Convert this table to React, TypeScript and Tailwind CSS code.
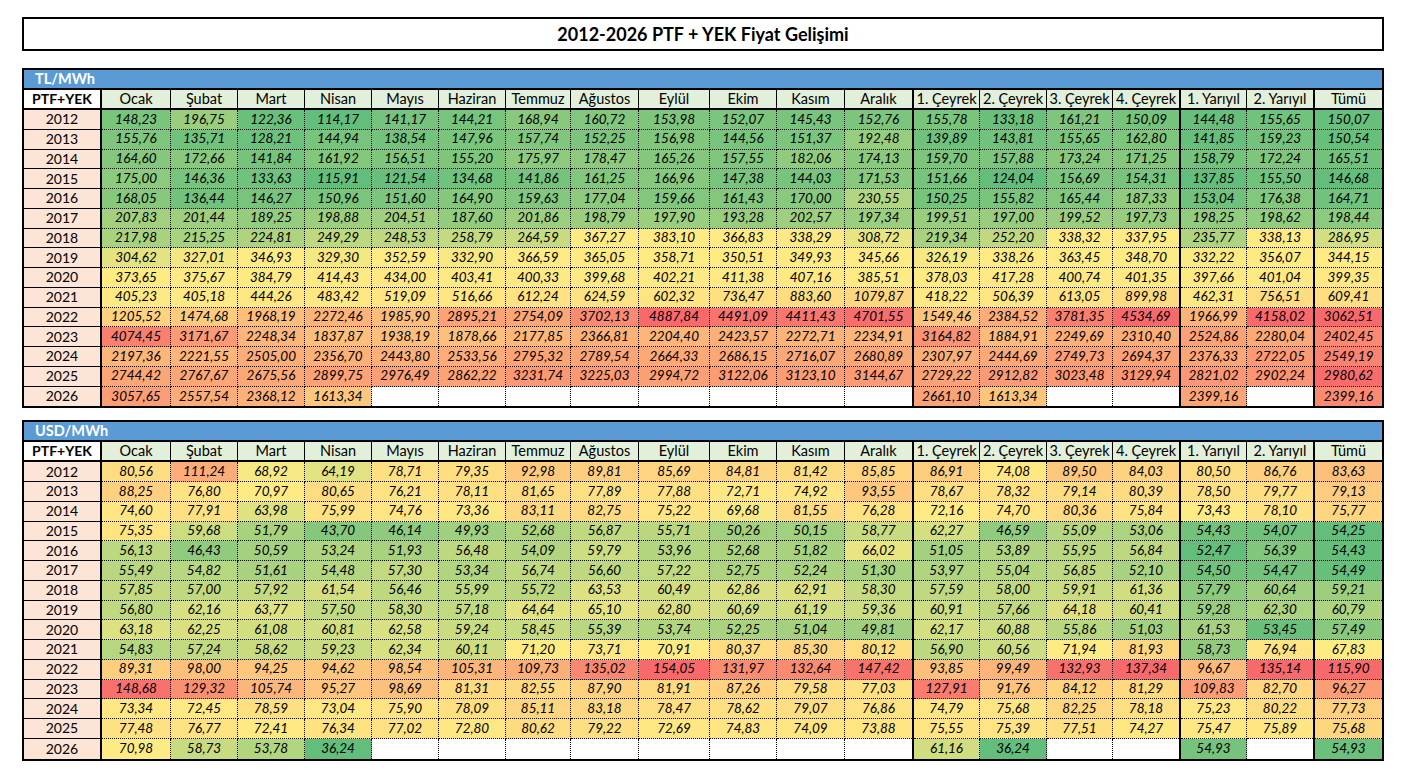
import React from "react";

const YEARS = ["2012","2013","2014","2015","2016","2017","2018","2019","2020","2021","2022","2023","2024","2025","2026"];

const TL: string[] = [
  "148,23 196,75 122,36 114,17 141,17 144,21 168,94 160,72 153,98 152,07 145,43 152,76 155,78 133,18 161,21 150,09 144,48 155,65 150,07",
  "155,76 135,71 128,21 144,94 138,54 147,96 157,74 152,25 156,98 144,56 151,37 192,48 139,89 143,81 155,65 162,80 141,85 159,23 150,54",
  "164,60 172,66 141,84 161,92 156,51 155,20 175,97 178,47 165,26 157,55 182,06 174,13 159,70 157,88 173,24 171,25 158,79 172,24 165,51",
  "175,00 146,36 133,63 115,91 121,54 134,68 141,86 161,25 166,96 147,38 144,03 171,53 151,66 124,04 156,69 154,31 137,85 155,50 146,68",
  "168,05 136,44 146,27 150,96 151,60 164,90 159,63 177,04 159,66 161,43 170,00 230,55 150,25 155,82 165,44 187,33 153,04 176,38 164,71",
  "207,83 201,44 189,25 198,88 204,51 187,60 201,86 198,79 197,90 193,28 202,57 197,34 199,51 197,00 199,52 197,73 198,25 198,62 198,44",
  "217,98 215,25 224,81 249,29 248,53 258,79 264,59 367,27 383,10 366,83 338,29 308,72 219,34 252,20 338,32 337,95 235,77 338,13 286,95",
  "304,62 327,01 346,93 329,30 352,59 332,90 366,59 365,05 358,71 350,51 349,93 345,66 326,19 338,26 363,45 348,70 332,22 356,07 344,15",
  "373,65 375,67 384,79 414,43 434,00 403,41 400,33 399,68 402,21 411,38 407,16 385,51 378,03 417,28 400,74 401,35 397,66 401,04 399,35",
  "405,23 405,18 444,26 483,42 519,09 516,66 612,24 624,59 602,32 736,47 883,60 1079,87 418,22 506,39 613,05 899,98 462,31 756,51 609,41",
  "1205,52 1474,68 1968,19 2272,46 1985,90 2895,21 2754,09 3702,13 4887,84 4491,09 4411,43 4701,55 1549,46 2384,52 3781,35 4534,69 1966,99 4158,02 3062,51",
  "4074,45 3171,67 2248,34 1837,87 1938,19 1878,66 2177,85 2366,81 2204,40 2423,57 2272,71 2234,91 3164,82 1884,91 2249,69 2310,40 2524,86 2280,04 2402,45",
  "2197,36 2221,55 2505,00 2356,70 2443,80 2533,56 2795,32 2789,54 2664,33 2686,15 2716,07 2680,89 2307,97 2444,69 2749,73 2694,37 2376,33 2722,05 2549,19",
  "2744,42 2767,67 2675,56 2899,75 2976,49 2862,22 3231,74 3225,03 2994,72 3122,06 3123,10 3144,67 2729,22 2912,82 3023,48 3129,94 2821,02 2902,24 2980,62",
  "3057,65 2557,54 2368,12 1613,34 - - - - - - - - 2661,10 1613,34 - - 2399,16 - 2399,16",
];

const USD: string[] = [
  "80,56 111,24 68,92 64,19 78,71 79,35 92,98 89,81 85,69 84,81 81,42 85,85 86,91 74,08 89,50 84,03 80,50 86,76 83,63",
  "88,25 76,80 70,97 80,65 76,21 78,11 81,65 77,89 77,88 72,71 74,92 93,55 78,67 78,32 79,14 80,39 78,50 79,77 79,13",
  "74,60 77,91 63,98 75,99 74,76 73,36 83,11 82,75 75,22 69,68 81,55 76,28 72,16 74,70 80,36 75,84 73,43 78,10 75,77",
  "75,35 59,68 51,79 43,70 46,14 49,93 52,68 56,87 55,71 50,26 50,15 58,77 62,27 46,59 55,09 53,06 54,43 54,07 54,25",
  "56,13 46,43 50,59 53,24 51,93 56,48 54,09 59,79 53,96 52,68 51,82 66,02 51,05 53,89 55,95 56,84 52,47 56,39 54,43",
  "55,49 54,82 51,61 54,48 57,30 53,34 56,74 56,60 57,22 52,75 52,24 51,30 53,97 55,04 56,85 52,10 54,50 54,47 54,49",
  "57,85 57,00 57,92 61,54 56,46 55,99 55,72 63,53 60,49 62,86 62,91 58,30 57,59 58,00 59,91 61,36 57,79 60,64 59,21",
  "56,80 62,16 63,77 57,50 58,30 57,18 64,64 65,10 62,80 60,69 61,19 59,36 60,91 57,66 64,18 60,41 59,28 62,30 60,79",
  "63,18 62,25 61,08 60,81 62,58 59,24 58,45 55,39 53,74 52,25 51,04 49,81 62,17 60,88 55,86 51,03 61,53 53,45 57,49",
  "54,83 57,24 58,62 59,23 62,34 60,11 71,20 73,71 70,91 80,37 85,30 80,12 56,90 60,56 71,94 81,93 58,73 76,94 67,83",
  "89,31 98,00 94,25 94,62 98,54 105,31 109,73 135,02 154,05 131,97 132,64 147,42 93,85 99,49 132,93 137,34 96,67 135,14 115,90",
  "148,68 129,32 105,74 95,27 98,69 81,31 82,55 87,90 81,91 87,26 79,58 77,03 127,91 91,76 84,12 81,29 109,83 82,70 96,27",
  "73,34 72,45 78,59 73,04 75,90 78,09 85,11 83,18 78,47 78,62 79,07 76,86 74,79 75,68 82,25 78,18 75,23 80,22 77,73",
  "77,48 76,77 72,41 76,34 77,02 72,80 80,62 79,22 72,69 74,83 74,09 73,88 75,55 75,39 77,51 74,27 75,47 75,89 75,68",
  "70,98 58,73 53,78 36,24 - - - - - - - - 61,16 36,24 - - 54,93 - 54,93",
];

const HEADERS = ["Ocak","Şubat","Mart","Nisan","Mayıs","Haziran","Temmuz","Ağustos","Eylül","Ekim","Kasım","Aralık","1. Çeyrek","2. Çeyrek","3. Çeyrek","4. Çeyrek","1. Yarıyıl","2. Yarıyıl","Tümü"];

const WIDTHS = [
  "w-[69px]","w-[67px]","w-[67px]","w-[67px]","w-[67px]","w-[67px]","w-[65px]","w-[68px]","w-[71px]","w-[67px]","w-[68px]","w-[67px]",
  "w-[66px]","w-[67px]","w-[66px]","w-[66px]",
  "w-[66px]","w-[66px]",
  "w-[67px]",
];

const GROUPS: [number, number][] = [[0, 12], [12, 16], [16, 18], [18, 19]];
const LAST_IN_GROUP = new Set([11, 15, 17, 18]);
const SEP_AFTER = new Set([11, 15, 17]);

const G = [99, 190, 123];
const Y = [255, 235, 132];
const R = [248, 105, 107];

function parse(s: string): number | null {
  if (s === "-") return null;
  return parseFloat(s.replace(",", "."));
}

function lerp(a: number[], b: number[], t: number) {
  const c = a.map((v, i) => Math.round(v + (b[i] - v) * Math.max(0, Math.min(1, t))));
  return `rgb(${c[0]},${c[1]},${c[2]})`;
}

function percentile50(vals: number[]) {
  const s = [...vals].sort((a, b) => a - b);
  const r = 0.5 * (s.length - 1);
  const lo = Math.floor(r);
  const hi = Math.ceil(r);
  return s[lo] + (s[hi] - s[lo]) * (r - lo);
}

function buildColors(rows: string[][]) {
  const colors: (string | null)[][] = rows.map((r) => r.map(() => null));
  for (const [a, b] of GROUPS) {
    const vals: number[] = [];
    rows.forEach((r) => {
      for (let i = a; i < b; i++) {
        const v = parse(r[i]);
        if (v !== null) vals.push(v);
      }
    });
    const min = Math.min(...vals);
    const max = Math.max(...vals);
    const mid = percentile50(vals);
    rows.forEach((r, ri) => {
      for (let i = a; i < b; i++) {
        const v = parse(r[i]);
        if (v === null) continue;
        colors[ri][i] = v <= mid ? lerp(G, Y, (v - min) / (mid - min)) : lerp(Y, R, (v - mid) / (max - mid));
      }
    });
  }
  return colors;
}

function Sep() {
  return <div className="w-[2px] shrink-0 self-stretch bg-black" />;
}

function DataTable({ title, data }: { title: string; data: string[] }) {
  const rows = data.map((r) => r.split(" "));
  const colors = buildColors(rows);
  return (
    <div className="ml-[22px] w-[1362px] border-2 border-black">
      <div className="flex h-[17.5px] items-center bg-[#5B9BD5] pl-[11px] text-[14.5px] font-bold leading-none text-white">
        {title}
      </div>
      <div className="h-[2px] bg-black" />
      <div className="flex h-[18.5px] text-[14.5px] leading-none">
        <div className="flex w-[76px] shrink-0 items-center justify-center bg-white text-[14px] font-bold">PTF+YEK</div>
        <Sep />
        {HEADERS.map((h, i) => (
          <React.Fragment key={h}>
            <div
              className={`${WIDTHS[i]} flex shrink-0 items-center justify-center bg-[#E2EFDA] ${
                LAST_IN_GROUP.has(i) ? "" : "border-r border-black"
              }`}
            >
              {h}
            </div>
            {SEP_AFTER.has(i) && <Sep />}
          </React.Fragment>
        ))}
      </div>
      <div className="h-[2px] bg-black" />
      {rows.map((r, ri) => {
        const lastRow = ri === rows.length - 1;
        return (
          <div key={ri} className="flex h-[19.75px] text-[13.5px] leading-none">
            <div
              className={`flex w-[76px] shrink-0 items-center justify-center bg-[#FCE4D6] text-[14px] ${
                lastRow ? "" : "border-b border-black"
              }`}
            >
              {YEARS[ri]}
            </div>
            <Sep />
            {r.map((v, i) => (
              <React.Fragment key={i}>
                <div
                  className={`${WIDTHS[i]} flex shrink-0 items-center justify-center border-dotted border-black italic ${
                    LAST_IN_GROUP.has(i) ? "" : "border-r"
                  } ${lastRow ? "" : "border-b"}`}
                  style={{ backgroundColor: colors[ri][i] ?? "#ffffff" }}
                >
                  {v === "-" ? "" : v}
                </div>
                {SEP_AFTER.has(i) && <Sep />}
              </React.Fragment>
            ))}
          </div>
        );
      })}
    </div>
  );
}

export default function App() {
  return (
    <div className="min-h-[780px] w-[1407px] bg-white pt-[17px] font-['Lato','Liberation_Sans',sans-serif] text-black">
      <div className="ml-[22px] flex h-[34px] w-[1362px] items-center justify-center border-2 border-black text-[18px] font-bold">
        2012-2026 PTF + YEK Fiyat Gelişimi
      </div>
      <div className="h-[17px]" />
      <DataTable title="TL/MWh" data={TL} />
      <div className="h-[12px]" />
      <DataTable title="USD/MWh" data={USD} />
    </div>
  );
}
